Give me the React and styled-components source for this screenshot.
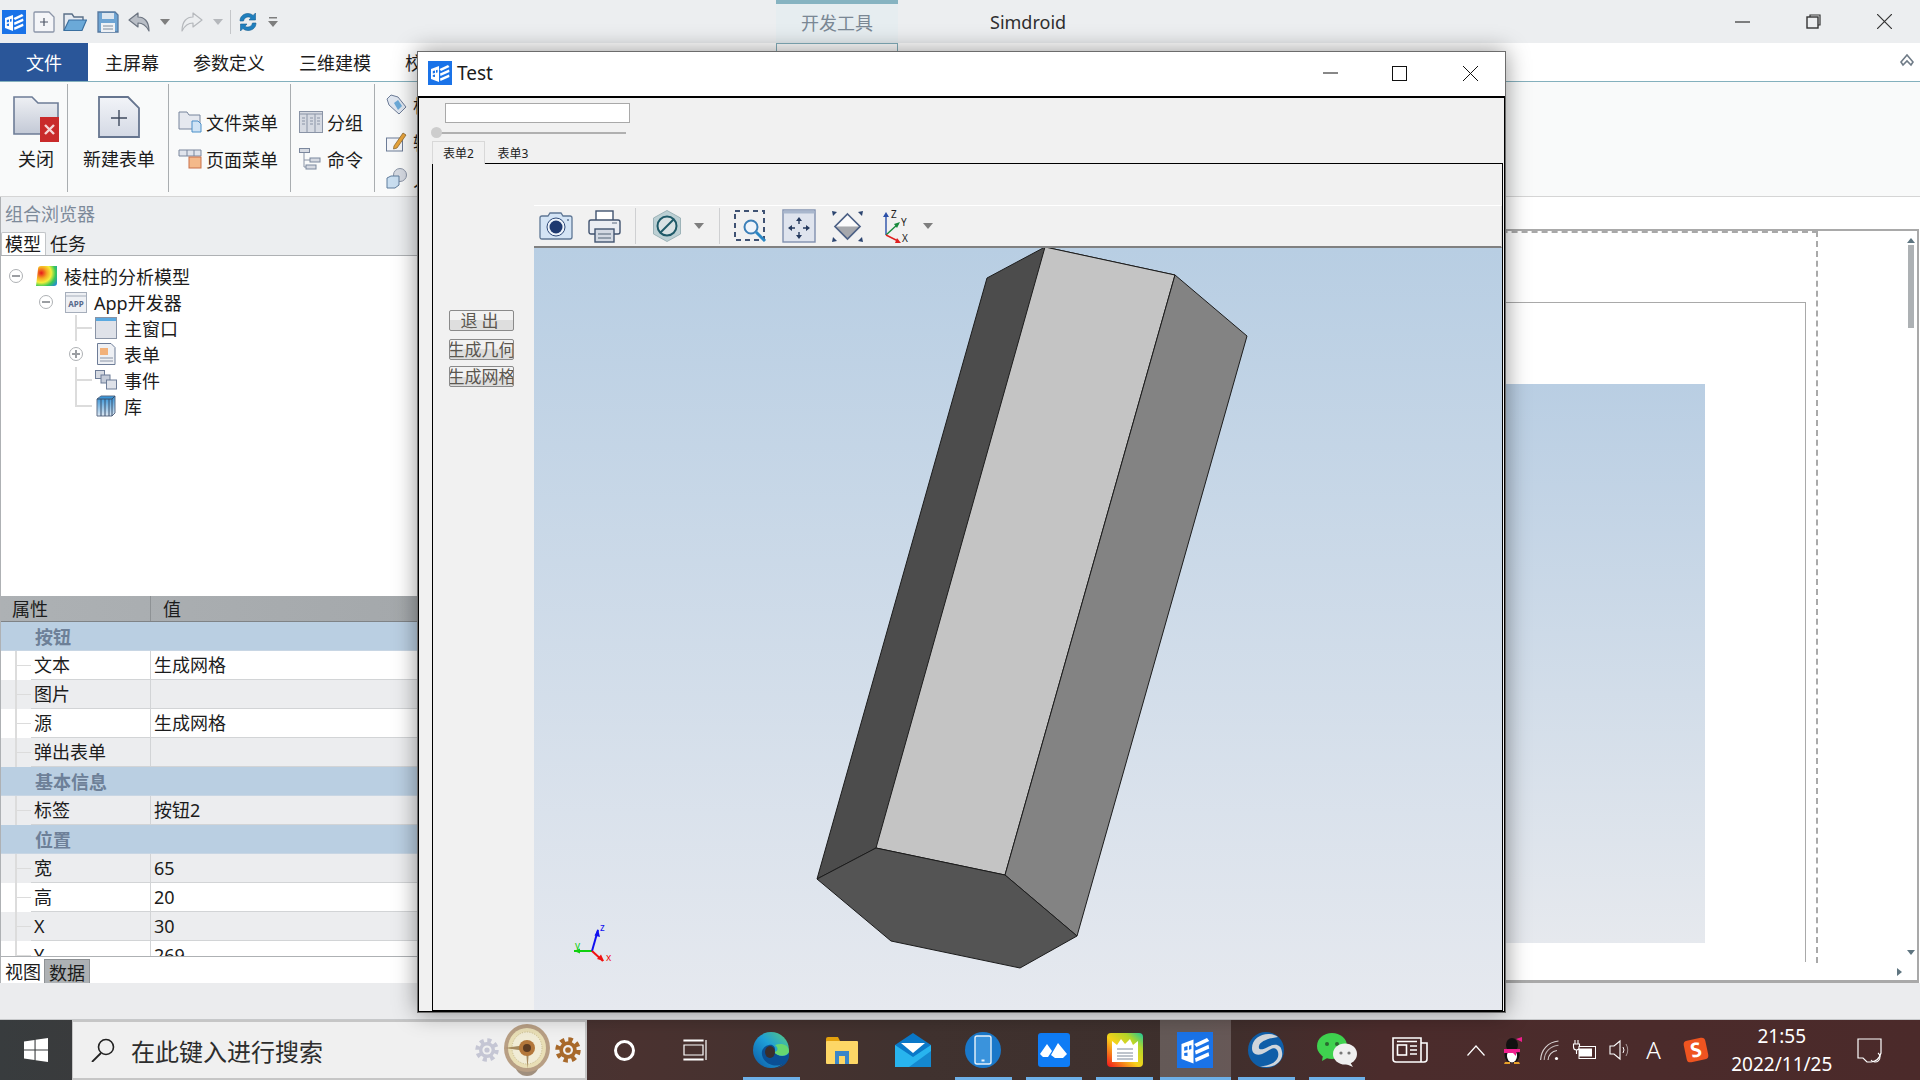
import React from 'react';
import styled, { createGlobalStyle } from 'styled-components';

const SANS = `"Noto Sans", "Noto Sans CJK SC", sans-serif`;

const GlobalStyle = createGlobalStyle`
    html, body { margin: 0; padding: 0; background: #fff; }
    body { font-family: ${SANS}; color: #1c1c1c; }
    * { box-sizing: border-box; }
`;

const Screen = styled.div`
    position: relative;
    display: flex;
    flex-direction: column;
    width: 1920px;
    height: 1080px;
    overflow: hidden;
`;

const Glyph = styled.svg`
    display: block;
    flex: none;
    margin-left: ${(p) => p.$ml || 0}px;
`;

/* ---------- icons ---------- */

const AppLogo = ({ s = 24, ml }) => (
    <Glyph $ml={ml} width={s} height={s} viewBox="0 0 24 24">
        <rect width="24" height="24" fill="#1a73e8" />
        <path d="M3 8 L11 5 V21 L3 18 Z" fill="#fff" />
        <path d="M4.8 10 L7 9.4 V12 L4.8 12.5 Z M8 9.2 L9.6 8.7 V11.4 L8 11.8 Z M4.8 14 L7 13.6 V16 L4.8 15.8 Z" fill="#1a73e8" />
        <path d="M11.5 8 L20 4 L21.5 6 L13 10 Z M12 12.5 L21 8.5 L21.5 11 L12.5 15 Z M12 17.5 L21 13.5 L21.5 16 L12.5 20 Z" fill="#fff" />
    </Glyph>
);

const QuickNew = ({ ml }) => (
    <Glyph $ml={ml} width="22" height="22" viewBox="0 0 22 22">
        <path d="M1 2 Q1 1 2 1 H16 L21 6 V20 Q21 21 20 21 H2 Q1 21 1 20 Z" fill="#f4f5f8" stroke="#8b95a8" strokeWidth="1.3" />
        <path d="M11 7 V15 M7 11 H15" stroke="#4c5566" strokeWidth="1.2" />
    </Glyph>
);

const QuickOpen = ({ ml }) => (
    <Glyph $ml={ml} width="24" height="20" viewBox="0 0 24 20">
        <path d="M1 18 V2 H9 L11 5 H20 V8" fill="#e6ebf2" stroke="#5b7088" strokeWidth="1.4" />
        <path d="M1 18.5 L6 8 H23.5 L19 18.5 Z" fill="#6ba9d8" stroke="#3a6f9f" strokeWidth="1.2" />
    </Glyph>
);

const QuickSave = ({ ml }) => (
    <Glyph $ml={ml} width="22" height="22" viewBox="0 0 22 22">
        <path d="M1 1 H18 L21 4 V21 H1 Z" fill="#6ea4d3" stroke="#56789e" strokeWidth="1.3" />
        <rect x="5" y="2" width="12" height="6" fill="#dce6f0" />
        <rect x="4" y="12" width="14" height="9" fill="#eef1f5" />
        <path d="M6 15 H16 M6 18 H16" stroke="#7d8a9a" />
    </Glyph>
);

const ArrowBack = ({ ml, flip, fill, stroke }) => (
    <Glyph $ml={ml} width="22" height="20" viewBox="0 0 22 20" style={flip ? { transform: 'scaleX(-1)' } : undefined}>
        <path d="M1 8 L10 1 V5 C16 5 21 9 21 19 C18 13 15 11 10 11 V15 Z" fill={fill} stroke={stroke} strokeWidth="1.2" strokeLinejoin="round" />
    </Glyph>
);

const Caret = ({ ml, w = 10, color = '#7e7e7e' }) => (
    <Glyph $ml={ml} width={w} height="6" viewBox="0 0 10 6">
        <path d="M0 0 H10 L5 6 Z" fill={color} />
    </Glyph>
);

const QuickMore = ({ ml }) => (
    <Glyph $ml={ml} width="10" height="10" viewBox="0 0 10 10">
        <path d="M1 0 H9 V1.5 H1 Z M0 4 H10 L5 10 Z" fill="#7e7e7e" />
    </Glyph>
);

const Refresh = ({ ml }) => (
    <Glyph $ml={ml} width="20" height="22" viewBox="0 0 20 22">
        <path d="M2 10 C2 5 6 2.5 10 2.5 C12.5 2.5 14 3.5 15 4.5 L17.5 2 V9 H11 L13 6.8 C11 5.2 6.5 5.5 5.5 10 Z" fill="#1f7fbe" stroke="#175f92" strokeWidth=".6" />
        <path d="M18 12 C18 17 14 19.5 10 19.5 C7.5 19.5 6 18.5 5 17.5 L2.5 20 V13 H9 L7 15.2 C9 16.8 13.5 16.5 14.5 12 Z" fill="#1f7fbe" stroke="#175f92" strokeWidth=".6" />
    </Glyph>
);

const CloseFolder = () => (
    <Glyph width="46" height="46" viewBox="0 0 46 46">
        <defs>
            <linearGradient id="folderFill" x1="0" y1="0" x2="0" y2="1">
                <stop offset="0" stopColor="#eef0f4" />
                <stop offset="1" stopColor="#c3c9d6" />
            </linearGradient>
        </defs>
        <path d="M1 1 H19 L25 7 H45 V38 H1 Z" fill="url(#folderFill)" stroke="#6d7c97" strokeWidth="1.6" />
        <rect x="27" y="21" width="19" height="25" fill="#c92a2a" />
        <path d="M32 29 L41 38 M41 29 L32 38" stroke="#f6d5d5" strokeWidth="2.4" />
    </Glyph>
);

const NewForm = () => (
    <Glyph width="42" height="42" viewBox="0 0 42 42">
        <defs>
            <linearGradient id="formFill" x1="0" y1="0" x2="0" y2="1">
                <stop offset="0" stopColor="#f2f4f8" />
                <stop offset="1" stopColor="#d4d9e4" />
            </linearGradient>
        </defs>
        <path d="M1 1 H30 L41 12 V41 H1 Z" fill="url(#formFill)" stroke="#66758f" strokeWidth="1.8" />
        <path d="M21 14 V30 M13 22 H29" stroke="#3f4a5e" strokeWidth="1.4" />
    </Glyph>
);

const FileMenuIcon = () => (
    <Glyph width="24" height="22" viewBox="0 0 24 22">
        <path d="M1 1 H9 L11 4 H22 V18 H1 Z" fill="#e5e8ef" stroke="#76849c" />
        <path d="M14 10 H20 L23 13 V21 H14 Z" fill="#cfe3f5" stroke="#4b8fc8" />
    </Glyph>
);

const PageMenuIcon = () => (
    <Glyph width="24" height="20" viewBox="0 0 24 20">
        <path d="M1 1 H23 V7 H1 Z M9 1 V7 M16 1 V7" fill="#e0e4ec" stroke="#7b879d" />
        <rect x="11" y="8" width="12" height="11" fill="#f4b98a" stroke="#c9714a" />
    </Glyph>
);

const GroupIcon = () => (
    <Glyph width="24" height="22" viewBox="0 0 24 22">
        <rect x=".5" y=".5" width="23" height="21" fill="#d6dae2" stroke="#8a94a6" />
        <path d="M1 3 H23 M8 3 V22 M16 3 V22 M3 7 H6 M3 10 H6 M3 13 H6 M11 7 H14 M11 10 H14 M11 13 H14 M18 7 H21 M18 10 H21 M18 13 H21" stroke="#8a94a6" />
    </Glyph>
);

const CommandIcon = () => (
    <Glyph width="22" height="22" viewBox="0 0 22 22">
        <path d="M5 5 V19 H8 M5 12 H12" fill="none" stroke="#8a94a6" />
        <rect x=".5" y=".5" width="10" height="4" fill="#d6dae2" stroke="#7b879d" />
        <rect x="11" y="10" width="10" height="4" fill="#d6dae2" stroke="#7b879d" />
        <rect x="7" y="17" width="10" height="4" fill="#d6dae2" stroke="#7b879d" />
    </Glyph>
);

const TagIcon = () => (
    <Glyph width="21" height="21" viewBox="0 0 21 21">
        <path d="M1 5 L5 1 L12 3 L20 13 L13 20 L3 11 Z" fill="#dfe6f0" stroke="#6d7c97" />
        <path d="M8 9 L12 6 L16 12 L12 16 Z" fill="#6ba9d8" />
    </Glyph>
);

const EditIcon = () => (
    <Glyph width="21" height="20" viewBox="0 0 21 20">
        <rect x=".5" y="6" width="16" height="13" fill="#f4f5f8" stroke="#6d7c97" />
        <path d="M8 14 L17 1 L20 3 L11 16 L7.5 17 Z" fill="#e8a33a" stroke="#8d6a30" strokeWidth=".8" />
    </Glyph>
);

const ShapeIcon = () => (
    <Glyph width="21" height="21" viewBox="0 0 21 21">
        <circle cx="14" cy="7" r="6.5" fill="#d6dae2" stroke="#8a94a6" />
        <path d="M1 10 L5 8 H13 V17 L9 20 H1 Z" fill="#c9def0" stroke="#5f7c9c" />
    </Glyph>
);

const ModelIcon = () => (
    <Glyph width="22" height="22" viewBox="0 0 22 22">
        <defs>
            <radialGradient id="heatFill" cx=".25" cy=".35" r=".95">
                <stop offset="0" stopColor="#e8171c" />
                <stop offset=".28" stopColor="#f5a623" />
                <stop offset=".5" stopColor="#f4ee3a" />
                <stop offset=".72" stopColor="#39c957" />
                <stop offset="1" stopColor="#1f7fe8" />
            </radialGradient>
        </defs>
        <path d="M3 4 Q3 1 6 1 H22 V18 Q22 21 19 21 H1 Z" fill="url(#heatFill)" />
    </Glyph>
);

const AppNodeIcon = () => (
    <Glyph width="22" height="21" viewBox="0 0 22 21">
        <rect x=".5" y=".5" width="21" height="20" fill="#eef0f4" stroke="#a6aebb" />
        <path d="M1 4 H21" stroke="#a6aebb" />
        <text x="11" y="15" fontSize="8" fontWeight="700" textAnchor="middle" fill="#56688a" fontFamily={SANS}>APP</text>
    </Glyph>
);

const WindowNodeIcon = () => (
    <Glyph width="22" height="22" viewBox="0 0 22 22">
        <rect x=".5" y=".5" width="21" height="21" fill="#dfe2e9" stroke="#8a94a6" />
        <rect x="1" y="1" width="20" height="3" fill="#5aa9e0" />
    </Glyph>
);

const FormNodeIcon = () => (
    <Glyph width="22" height="22" viewBox="0 0 22 22">
        <path d="M2.5 .5 H16 L20 4.5 V21.5 H2.5 Z" fill="#eef0f4" stroke="#6d7c97" />
        <rect x="5" y="5" width="8" height="7" fill="#f2b179" />
        <path d="M5 15 H18 M5 18 H18" stroke="#8a94a6" />
    </Glyph>
);

const EventNodeIcon = () => (
    <Glyph width="22" height="20" viewBox="0 0 22 20">
        <rect x=".5" y=".5" width="9" height="8" fill="#d6dae2" stroke="#6d7c97" />
        <rect x="6" y="5" width="9" height="8" fill="#c4cbd8" stroke="#6d7c97" />
        <rect x="11.5" y="10" width="10" height="9" fill="#dfe2e9" stroke="#6d7c97" />
    </Glyph>
);

const LibraryNodeIcon = () => (
    <Glyph width="22" height="22" viewBox="0 0 22 22">
        <defs>
            <linearGradient id="bookFill" x1="0" y1="0" x2="0" y2="1">
                <stop offset="0" stopColor="#2b8ed6" />
                <stop offset="1" stopColor="#dfe8f2" />
            </linearGradient>
        </defs>
        <path d="M2 4 L6 1 H20 V18 L17 21 H2 Z" fill="url(#bookFill)" stroke="#5f6f88" />
        <path d="M6 4 V21 M10 4 V21 M14 4 V21 M2 4 H17 V21 M17 4 L20 1" fill="none" stroke="#39506e" />
    </Glyph>
);

const Camera = ({ ml }) => (
    <Glyph $ml={ml} width="34" height="28" viewBox="0 0 34 28">
        <path d="M1 6 Q1 4 3 4 H9 L11 1 H22 L24 4 H31 Q33 4 33 6 V25 Q33 27 31 27 H3 Q1 27 1 25 Z" fill="#d4e4f5" stroke="#5f7795" strokeWidth="1.3" />
        <circle cx="17" cy="15" r="9" fill="#eef4fb" stroke="#2f4a78" />
        <circle cx="17" cy="15" r="6.5" fill="#1f3a70" />
        <circle cx="29" cy="8" r="1" fill="#5f7795" />
    </Glyph>
);

const Printer = ({ ml }) => (
    <Glyph $ml={ml} width="33" height="33" viewBox="0 0 33 33">
        <rect x="8" y="1" width="17" height="10" fill="#fff" stroke="#41536f" strokeWidth="1.4" />
        <rect x="1" y="10" width="31" height="14" rx="2" fill="#eaedf3" stroke="#41536f" strokeWidth="1.4" />
        <path d="M24 13 H29" stroke="#8a94a6" strokeWidth="1.5" />
        <rect x="7" y="19" width="19" height="13" fill="#d3d9e3" stroke="#41536f" strokeWidth="1.4" />
        <path d="M10 24 H23 M10 28 H23" stroke="#7d8a9a" strokeWidth="1.3" />
    </Glyph>
);

const HexNone = ({ ml }) => (
    <Glyph $ml={ml} width="28" height="32" viewBox="0 0 28 32">
        <path d="M14 .5 L27.5 8 V24 L14 31.5 L.5 24 V8 Z" fill="#bcd0d4" stroke="#9db3b8" />
        <circle cx="14" cy="16" r="9.5" fill="#d9e2e4" stroke="#1f5a68" strokeWidth="2" />
        <path d="M7.5 22.5 L20.5 9.5" stroke="#1f5a68" strokeWidth="2" />
    </Glyph>
);

const ZoomBox = ({ ml }) => (
    <Glyph $ml={ml} width="33" height="32" viewBox="0 0 33 32">
        <rect x="1" y="1" width="29" height="29" fill="none" stroke="#3f5273" strokeWidth="2" strokeDasharray="5 4" />
        <circle cx="17" cy="17" r="6.5" fill="#eef4fb" stroke="#3b7fb8" strokeWidth="2" />
        <path d="M22 22 L31 31" stroke="#2a87c4" strokeWidth="3" />
    </Glyph>
);

const MoveView = ({ ml }) => (
    <Glyph $ml={ml} width="34" height="34" viewBox="0 0 34 34">
        <rect x="1" y="1" width="32" height="32" fill="#dfe4ee" stroke="#7f8fae" strokeWidth="1.4" />
        <rect x="1.5" y="1.5" width="31" height="3" fill="#a9b7cd" />
        <path d="M17 11 V15 M17 23 V27 M9 19 H13 M21 19 H25" stroke="#24395e" strokeWidth="1.4" />
        <path d="M17 8 L20 12 H14 Z M17 30 L14 26 H20 Z M6 19 L10 16 V22 Z M28 19 L24 22 V16 Z" fill="#24395e" />
    </Glyph>
);

const FitDiamond = ({ ml }) => (
    <Glyph $ml={ml} width="33" height="33" viewBox="0 0 33 33">
        <path d="M16.5 4 L29 16.5 H4 Z" fill="#fbfbfc" />
        <path d="M4 16.5 H29 L16.5 29 Z" fill="#a6a8ad" />
        <path d="M16.5 4 L29 16.5 L16.5 29 L4 16.5 Z" fill="none" stroke="#4c6085" strokeWidth="1.7" />
        <path d="M1 1 L6 2 L2 6 Z M32 1 L31 6 L27 2 Z M1 32 L2 27 L6 31 Z M32 32 L27 31 L31 27 Z" fill="#2c4570" />
    </Glyph>
);

const AxisView = ({ ml }) => (
    <Glyph $ml={ml} width="28" height="34" viewBox="0 0 28 34">
        <path d="M3 26 V6" stroke="#2a4fa8" strokeWidth="1.4" />
        <path d="M3 3 L6 8 H0 Z" fill="#2a4fa8" />
        <path d="M3 26 L15 15" stroke="#178a3c" strokeWidth="1.4" />
        <path d="M17 13 L14 19 L11 15 Z" fill="#178a3c" />
        <path d="M3 26 L15 32" stroke="#e02020" strokeWidth="1.4" />
        <path d="M18 34 L12 34 L14 29 Z" fill="#e02020" />
        <text x="8" y="9" fontSize="10" fill="#222" fontFamily={SANS}>Z</text>
        <text x="18" y="17" fontSize="10" fill="#222" fontFamily={SANS}>Y</text>
        <text x="19" y="33" fontSize="10" fill="#222" fontFamily={SANS}>X</text>
    </Glyph>
);

const WinLogo = () => (
    <Glyph width="24" height="24" viewBox="0 0 24 24">
        <path d="M0 3.5 L10.5 2 V11.4 H0 Z M11.6 1.8 L24 0 V11.4 H11.6 Z M0 12.6 H10.5 V22 L0 20.5 Z M11.6 12.6 H24 V24 L11.6 22.2 Z" fill="#fff" />
    </Glyph>
);

const SearchGlass = () => (
    <Glyph width="24" height="24" viewBox="0 0 24 24">
        <circle cx="15" cy="9" r="7.5" fill="none" stroke="#222" strokeWidth="1.6" />
        <path d="M10 15 L1 24" stroke="#222" strokeWidth="1.8" />
    </Glyph>
);

const Gear = ({ size, ml, color, hub, inner }) => (
    <Glyph $ml={ml} width={size} height={size} viewBox="0 0 24 24">
        <circle cx="12" cy="12" r="9.5" fill="none" stroke={color} strokeWidth="4.5" strokeDasharray="4 3.46" />
        <circle cx="12" cy="12" r="8" fill={color} />
        <circle cx="12" cy="12" r="4.6" fill={hub} />
        <circle cx="12" cy="12" r="2.6" fill={inner} />
    </Glyph>
);

const Dial = ({ ml }) => (
    <Glyph $ml={ml} width="50" height="52" viewBox="0 0 50 52">
        <circle cx="25" cy="40" r="12" fill="#a08f7d" />
        <ellipse cx="25" cy="24" rx="23" ry="24" fill="#b89f84" />
        <ellipse cx="25" cy="24" rx="19" ry="20" fill="#e9dfb6" />
        <ellipse cx="25" cy="24" rx="15" ry="16" fill="#f1ecd6" stroke="#c5b98c" strokeDasharray="1 1.5" />
        <path d="M3 24 L24 21 V27 Z M24 26 H27 L25.5 45 Z" fill="#a58a5f" />
        <circle cx="25" cy="24" r="8" fill="#b3773a" />
        <circle cx="25" cy="24" r="4" fill="#5c3c22" />
    </Glyph>
);

const EdgeIcon = () => (
    <Glyph width="36" height="36" viewBox="0 0 36 36">
        <defs>
            <linearGradient id="edgeFill" x1="0" y1="1" x2="1" y2="0">
                <stop offset="0" stopColor="#0c59a4" />
                <stop offset=".55" stopColor="#1e9fd8" />
                <stop offset="1" stopColor="#5ed07a" />
            </linearGradient>
        </defs>
        <circle cx="18" cy="18" r="18" fill="url(#edgeFill)" />
        <path d="M36 21 C32 26 24 24 21 20 C24 16 20 12 16 13 C10 14 7 20 10 26 C13 32 22 36 30 32 C26 36 20 37 16 36 C32 38 37 28 36 21 Z" fill="#0a4f94" />
        <path d="M36 20 C36 12 28 11 22 13 C26 16 25 20 21 20 C24 24 32 26 36 20 Z" fill="#67d66f" />
        <ellipse cx="17" cy="20" rx="5" ry="6" fill="#3a2e2c" />
    </Glyph>
);

const ExplorerIcon = () => (
    <Glyph width="32" height="27" viewBox="0 0 32 27">
        <path d="M0 2 Q0 0 2 0 H12 L14 4 V10 H0 Z" fill="#e3a10e" />
        <rect x="0" y="4" width="32" height="23" rx="1" fill="#fdd766" />
        <path d="M9 27 V14 H23 V27 H19 V19 H13 V27 Z" fill="#3a86c8" />
    </Glyph>
);

const MailIcon = () => (
    <Glyph width="36" height="34" viewBox="0 0 36 34">
        <path d="M0 12 L18 0 L36 12 V34 H0 Z" fill="#0a78c8" />
        <path d="M6 10 H30 L18 20 Z" fill="#fff" />
        <path d="M0 12 L18 24 L36 12 V34 H0 Z" fill="#28b4ee" />
        <path d="M36 34 H14 L36 18 Z" fill="#1488cf" />
    </Glyph>
);

const PhoneIcon = () => (
    <Glyph width="36" height="36" viewBox="0 0 36 36">
        <circle cx="18" cy="18" r="18" fill="#1a78c9" />
        <rect x="10" y="4" width="16" height="28" rx="2" fill="#3a93dc" stroke="#e8f2fa" strokeWidth="1.4" />
        <rect x="16.5" y="27.5" width="3" height="2" fill="#e8f2fa" />
    </Glyph>
);

const FeishuIcon = () => (
    <Glyph width="32" height="34" viewBox="0 0 32 34">
        <rect width="32" height="34" rx="3" fill="#0f7cf5" />
        <path d="M2 21 L9 11 L14 18 L10 24 H5 Z M13 22 L20 10 L29 21 L25 25 H17 Z" fill="#fff" />
    </Glyph>
);

const NotesIcon = () => (
    <Glyph width="36" height="34" viewBox="0 0 36 34">
        <defs>
            <linearGradient id="rainbowFill" x1="0" y1="1" x2="1" y2="0">
                <stop offset="0" stopColor="#f2101c" />
                <stop offset=".45" stopColor="#f8d21a" />
                <stop offset=".75" stopColor="#b5d62a" />
                <stop offset="1" stopColor="#17c9a0" />
            </linearGradient>
        </defs>
        <rect width="36" height="34" rx="4" fill="url(#rainbowFill)" />
        <path d="M5 8 L10 12 L14 6 L18 11 L23 6 L26 12 L31 8 V29 H5 Z" fill="#fff" />
        <path d="M10 16 H26 M10 20 H26 M10 23 H26 M10 26 H26" stroke="#7e8a9a" strokeWidth="1.2" />
    </Glyph>
);

const SwirlIcon = () => (
    <Glyph width="36" height="36" viewBox="0 0 36 36">
        <circle cx="18" cy="18" r="18" fill="#0f5ea8" />
        <path d="M30 5 C20 -2 4 4 4 16 C4 24 12 24 18 20 C24 16 28 14 30 20 C32 28 24 34 12 34 C24 38 36 30 34 20 C33 10 24 12 18 16 C14 18 10 18 11 14 C12 9 22 6 30 5 Z" fill="#cfd5db" />
    </Glyph>
);

const WeChatIcon = () => (
    <Glyph width="40" height="34" viewBox="0 0 40 34">
        <ellipse cx="15" cy="13" rx="15" ry="13" fill="#3fd24f" />
        <path d="M6 22 L5 28 L12 24 Z" fill="#3fd24f" />
        <circle cx="10" cy="11" r="2" fill="#2a6a30" />
        <circle cx="20" cy="11" r="2" fill="#2a6a30" />
        <ellipse cx="28" cy="21" rx="12" ry="10.5" fill="#efefef" />
        <path d="M33 29 L36 34 L29 31 Z" fill="#efefef" />
        <circle cx="24" cy="20" r="1.6" fill="#777" />
        <circle cx="32" cy="20" r="1.6" fill="#777" />
    </Glyph>
);

const NewsIcon = ({ ml }) => (
    <Glyph $ml={ml} width="36" height="26" viewBox="0 0 36 26">
        <path d="M1 1 H29 V25 H4 Q1 25 1 22 Z M29 6 H35 V22 Q35 25 32 25 H29" fill="none" stroke="#fff" strokeWidth="1.6" />
        <rect x="5.5" y="8" width="9" height="10" fill="none" stroke="#fff" strokeWidth="1.6" />
        <path d="M5 4.5 H25 M18 9 H25 M18 13 H25 M18 17 H25" stroke="#fff" strokeWidth="1.6" />
    </Glyph>
);

const Chevron = ({ ml }) => (
    <Glyph $ml={ml} width="18" height="11" viewBox="0 0 18 11">
        <path d="M.5 10.5 L9 1 L17.5 10.5" fill="none" stroke="#fff" strokeWidth="1.2" />
    </Glyph>
);

const Penguin = ({ ml }) => (
    <Glyph $ml={ml} width="21" height="27" viewBox="0 0 21 27">
        <ellipse cx="10" cy="8" rx="6" ry="7" fill="#111" />
        <ellipse cx="10" cy="18" rx="7.5" ry="8" fill="#111" />
        <ellipse cx="10" cy="19" rx="5" ry="6.5" fill="#fff" />
        <path d="M2 12 H18 V15 L14 15.5 V19 L11 16 H2 Z" fill="#ef1f8e" />
        <path d="M14 2 L20 0 V5 Z" fill="#ef1f8e" />
        <path d="M3 25 H8 V27 H2 Z M12 25 H17 L18 27 H12 Z" fill="#e8a02a" />
    </Glyph>
);

const WifiIcon = ({ ml }) => (
    <Glyph $ml={ml} width="19" height="21" viewBox="0 0 19 21">
        <g fill="none" stroke="#d9d3d3" strokeWidth="1.1">
            <path d="M.6 20 C1 10 8 2 18.5 1" />
            <path d="M4.2 20 C4.5 12 10 6 18.5 5.2" opacity=".8" />
            <path d="M8 20 C8.2 15 12 11 17 10.5" />
        </g>
        <circle cx="16.5" cy="18.5" r="1.6" fill="#fff" />
    </Glyph>
);

const BatteryIcon = ({ ml }) => (
    <Glyph $ml={ml} width="24" height="20" viewBox="0 0 24 20">
        <path d="M3 0 V4 M6 0 V4 M1.5 4 H7.5 V7 Q7.5 10 4.5 10 Q1.5 10 1.5 7 Z M4.5 10 V14" fill="none" stroke="#fff" strokeWidth="1.1" />
        <rect x="7" y="6.5" width="16.5" height="12" fill="#4a2a2a" stroke="#fff" />
        <rect x="7" y="8.5" width="13" height="8" fill="#fff" />
    </Glyph>
);

const VolumeIcon = ({ ml }) => (
    <Glyph $ml={ml} width="22" height="22" viewBox="0 0 22 22">
        <path d="M1 7 H5 L11 2 V20 L5 15 H1 Z" fill="none" stroke="#fff" strokeWidth="1.1" />
        <path d="M14 8 Q16 11 14 14" fill="none" stroke="#fff" />
        <path d="M17 5 Q20.5 11 17 17" fill="none" stroke="#a99a9a" />
    </Glyph>
);

const NoticeIcon = ({ ml }) => (
    <Glyph $ml={ml} width="25" height="25" viewBox="0 0 25 25">
        <path d="M1 1 H24 V15 Q22 23 14 24 H10 L6 20 H1 Z" fill="none" stroke="#fff" strokeWidth="1.2" />
        <path d="M21 15 A5 5 0 1 1 14 22" fill="none" stroke="#fff" strokeWidth="1.1" />
    </Glyph>
);

/* ---------- main window chrome ---------- */

const TitleBar = styled.div`
    display: flex;
    align-items: center;
    flex: none;
    height: 43px;
    padding-left: 2px;
    background: #eceef0;
`;

const QuickTools = styled.div`
    display: flex;
    align-items: center;
    width: 774px;
`;

const QuickSep = styled.div`
    flex: none;
    width: 1px;
    height: 24px;
    margin-left: 7px;
    background: #c4c6c9;
`;

const ContextTab = styled.div`
    display: flex;
    align-items: center;
    justify-content: center;
    width: 122px;
    height: 43px;
    padding-bottom: 4px;
    border-top: 4px solid #86b3c1;
    background: #e6edf0;
    color: #7a8794;
    font-size: 18px;
`;

const AppTitle = styled.div`
    margin-left: 92px;
    color: #2f2f2f;
    font-size: 18px;
`;

const WindowControls = styled.div`
    display: flex;
    align-items: center;
    margin-left: auto;
`;

const ControlSlot = styled.div`
    display: flex;
    align-items: center;
    justify-content: center;
    width: ${(p) => p.$w}px;
`;

const MenuBar = styled.div`
    position: relative;
    display: flex;
    align-items: stretch;
    flex: none;
    height: 39px;
    background: #fff;
    border-bottom: 1px solid #84b0bd;
`;

const FileTab = styled.div`
    display: flex;
    align-items: center;
    justify-content: center;
    width: 88px;
    background: #2a5699;
    color: #fff;
    font-size: 18px;
`;

const MenuItems = styled.div`
    display: flex;
    align-items: center;
    gap: 34px;
    padding-left: 17px;
    font-size: 18px;
`;

const ContextOutline = styled.div`
    position: absolute;
    left: 776px;
    top: 0;
    width: 122px;
    height: 12px;
    border: 1px solid #84b0bd;
    background: #fff;
`;

const CollapseMark = styled.svg`
    position: absolute;
    right: 6px;
    top: 11px;
`;

const Ribbon = styled.div`
    display: flex;
    flex: none;
    height: 115px;
    padding: 2px 0 4px 1px;
    background: #f9fafa;
    border-bottom: 1px solid #d5d5d5;
`;

const RibbonGroup = styled.div`
    flex: none;
    width: ${(p) => p.$w}px;
    border-right: 1px solid #a9adb0;
`;

const LargeTool = styled.div`
    display: flex;
    flex-direction: column;
    align-items: center;
    padding: 12px 0 0 ${(p) => p.$shift}px;
    font-size: 18px;
`;

const LargeIcon = styled.div`
    display: flex;
    justify-content: center;
    height: 49px;
`;

const ToolRows = styled.div`
    padding: ${(p) => p.$top}px 0 0 ${(p) => p.$left}px;
    font-size: 18px;
`;

const ToolRow = styled.div`
    display: flex;
    align-items: center;
    gap: ${(p) => p.$gap || 4}px;
    height: 37px;
    white-space: nowrap;
`;

/* ---------- left panel ---------- */

const Body = styled.div`
    display: flex;
    flex: 1;
    min-height: 0;
    background: #fff;
`;

const LeftPanel = styled.div`
    display: flex;
    flex-direction: column;
    flex: none;
    width: 420px;
    border-left: 1px solid #aeb1b4;
`;

const PanelCaption = styled.div`
    flex: none;
    height: 35px;
    padding: 2px 0 0 4px;
    background: #eceef0;
    color: #7d8a9a;
    font-size: 18px;
    line-height: 30px;
`;

const ModelTabs = styled.div`
    display: flex;
    flex: none;
    height: 24px;
    background: #eceef0;
    border-bottom: 1px solid #aeb1b4;
    font-size: 18px;
    line-height: 24px;
`;

const ModelTab = styled.div`
    padding: 0 4px 0 3px;
    background: ${(p) => (p.$active ? '#fff' : 'transparent')};
    border: ${(p) => (p.$active ? '1px solid #c2c5c8' : '1px solid transparent')};
    border-bottom: 0;
    border-radius: 2px 2px 0 0;
    line-height: 22px;
`;

const Tree = styled.div`
    flex: none;
    height: 340px;
    padding-top: 7px;
    background: #fff;
`;

const TreeRow = styled.div`
    position: relative;
    display: flex;
    align-items: center;
    height: 26px;
    padding-left: ${(p) => p.$pad}px;
    font-size: 18px;
    white-space: nowrap;

    ${(p) => p.$branch && `
        &::before {
            content: '';
            position: absolute;
            left: 74px;
            top: 0;
            width: 17px;
            height: ${p.$branch === 'last' ? '13px' : '26px'};
            border-left: 2px solid #dcdcdc;
        }
        &::after {
            content: '';
            position: absolute;
            left: 74px;
            top: 12px;
            width: 17px;
            height: 2px;
            background: #dcdcdc;
        }
    `}
`;

const Toggle = styled.div`
    position: relative;
    flex: none;
    width: 14px;
    height: 14px;
    margin-right: 12px;
    border: 1px solid #aeb1b4;
    border-radius: 50%;
    background: #fff;

    &::before {
        content: '';
        position: absolute;
        left: 2px;
        right: 2px;
        top: 5px;
        height: 2px;
        background: #9b9ea2;
    }

    ${(p) => p.$closed && `
        &::after {
            content: '';
            position: absolute;
            top: 2px;
            bottom: 2px;
            left: 5px;
            width: 2px;
            background: #9b9ea2;
        }
    `}
`;

const TreeSpacer = styled.div`
    flex: none;
    width: 26px;
`;

const TreeLabel = styled.span`
    margin-left: 7px;
`;

const PropHeader = styled.div`
    display: flex;
    flex: none;
    height: 26px;
    background: linear-gradient(90deg, #adb1b4, #a4a8ab);
    border-bottom: 1px solid #7f8386;
    font-size: 18px;
    line-height: 27px;
`;

const PropHeadCell = styled.div`
    width: ${(p) => p.$w || 150}px;
    padding-left: ${(p) => p.$pad}px;
    border-right: ${(p) => (p.$last ? 0 : '1px solid #8e9295')};
`;

const PropList = styled.div`
    flex: none;
    height: 334px;
    overflow: hidden;
    font-size: 18px;
`;

const PropGroup = styled.div`
    height: 29px;
    padding-left: 34px;
    background: #bacfe2;
    border-bottom: 1px solid #c8d6e4;
    color: #6d8098;
    font-weight: 700;
    line-height: 30px;
`;

const PropRow = styled.div`
    display: flex;
    height: 29px;
    background: ${(p) => (p.$shade ? '#ecedef' : '#fff')};
    line-height: 29px;
`;

const PropGuide = styled.div`
    position: relative;
    flex: none;
    width: 30px;

    &::before {
        content: '';
        position: absolute;
        left: 14px;
        top: 0;
        bottom: 0;
        width: 2px;
        background: #dcdcdc;
    }

    &::after {
        content: '';
        position: absolute;
        left: 16px;
        right: 0;
        top: 14px;
        height: 1px;
        background: #dcdcdc;
    }
`;

const PropName = styled.div`
    flex: none;
    width: 120px;
    padding-left: 3px;
    border-bottom: 1px solid #d2d4d6;
    border-right: 1px solid #d2d4d6;
`;

const PropValue = styled.div`
    flex: 1;
    padding-left: 3px;
    border-bottom: 1px solid #d2d4d6;
`;

const BottomTabs = styled.div`
    display: flex;
    align-items: flex-end;
    flex: none;
    height: 27px;
    padding-left: 2px;
    gap: 1px;
    border-top: 1px solid #aeb1b4;
    font-size: 18px;
`;

const BottomTab = styled.div`
    height: 24px;
    padding: 0 ${(p) => (p.$active ? 2 : 4)}px;
    background: ${(p) => (p.$active ? 'transparent' : '#adb1b4')};
    border: ${(p) => (p.$active ? 0 : '1px solid #8e9295')};
    border-bottom: 0;
    line-height: 26px;
`;

/* ---------- designer canvas, mostly hidden by the dialog ---------- */

const Workspace = styled.div`
    display: flex;
    flex: 1;
    flex-direction: column;
    padding-top: 32px;
    padding-right: 1px;
`;

const DesignFrame = styled.div`
    display: flex;
    flex: 1;
    flex-direction: column;
    border-top: 2px solid #a9a9a9;
    border-right: 2px solid #a9a9a9;
    border-bottom: 3px solid #a9a9a9;
`;

const DesignRow = styled.div`
    display: flex;
    height: 732px;
`;

const DashedSheet = styled.div`
    flex: none;
    width: 1398px;
    padding-top: 69px;
    padding-right: 10px;
    border-top: 2px dashed #a9a9a9;
    border-right: 2px dashed #a9a9a9;
`;

const FormOutline = styled.div`
    height: 660px;
    padding-top: 81px;
    padding-right: 100px;
    border-top: 1px solid #a9a9a9;
    border-right: 1px solid #a9a9a9;
`;

const FormFill = styled.div`
    height: 559px;
    background: linear-gradient(180deg, #b9cee3, #e6e9ee);
`;

const ScrollColumn = styled.div`
    display: flex;
    flex-direction: column;
    align-items: flex-end;
    flex: 1;
    padding: 7px 2px 0 0;
`;

const ScrollThumb = styled.div`
    width: 6px;
    height: 83px;
    margin-top: 2px;
    margin-right: 1px;
    background: #adb1b4;
`;

const ScrollArrow = styled.div`
    width: 0;
    height: 0;
    margin-top: ${(p) => p.$mt || 0}px;
    border-left: 4px solid transparent;
    border-right: 4px solid transparent;
    ${(p) => (p.$down ? 'border-top: 5px solid #5f7580;' : 'border-bottom: 5px solid #5f7580;')}
`;

const HorizontalEnd = styled.div`
    display: flex;
    justify-content: flex-end;
    padding: 5px 15px 0 0;
`;

const ScrollArrowRight = styled.div`
    width: 0;
    height: 0;
    border-top: 4px solid transparent;
    border-bottom: 4px solid transparent;
    border-left: 5px solid #5f7580;
`;

const StatusBar = styled.div`
    flex: none;
    height: 37px;
    background: #ebecee;
    border-bottom: 1px solid #c6c8ca;
`;

/* ---------- dialog ---------- */

const Dialog = styled.div`
    position: absolute;
    left: 417px;
    top: 51px;
    display: flex;
    flex-direction: column;
    width: 1089px;
    height: 962px;
    border: 1px solid #6c6c6c;
    background: #fff;
    box-shadow: 0 0 22px rgba(0, 0, 0, .42);
`;

const DialogTitle = styled.div`
    display: flex;
    align-items: center;
    flex: none;
    height: 44px;
    padding: 0 0 2px 10px;
    font-size: 19px;
    gap: 5px;
`;

const DialogControls = styled.div`
    display: flex;
    align-items: center;
    margin-left: auto;
    padding-right: 27px;
    gap: 54px;
`;

const DialogClose = styled.svg`
    margin-left: 2px;
`;

const DialogBody = styled.div`
    display: flex;
    flex: 1;
    flex-direction: column;
    min-height: 0;
    background: #f1f1f1;
    border: 1px solid #000;
    border-top-width: 2px;
`;

const NameField = styled.div`
    flex: none;
    width: 185px;
    height: 20px;
    margin: 5px 0 0 26px;
    background: #fff;
    border: 1px solid #a9a9a9;
`;

const SliderTrack = styled.div`
    position: relative;
    flex: none;
    width: 195px;
    height: 12px;
    margin: 4px 0 0 12px;

    &::before {
        content: '';
        position: absolute;
        left: 4px;
        right: 0;
        top: 5px;
        height: 2px;
        background: #b0b0b0;
    }
`;

const SliderKnob = styled.div`
    position: absolute;
    left: 0;
    top: 0;
    width: 11px;
    height: 11px;
    border-radius: 50%;
    background: #cdcdcd;
`;

const FormTabs = styled.div`
    display: flex;
    flex: none;
    height: 23px;
    margin: 2px 0 0 13px;
    font-size: 12px;
`;

const FormTab = styled.div`
    position: relative;
    z-index: 1;
    display: flex;
    align-items: center;
    justify-content: center;
    width: ${(p) => (p.$active ? 53 : 54)}px;
    margin-left: ${(p) => (p.$active ? 0 : 1)}px;
    height: 23px;
    background: ${(p) => (p.$active ? '#f1f1f1' : 'transparent')};
    border: ${(p) => (p.$active ? '1px solid #d8d8d8' : 0)};
    border-bottom: 0;
`;

const FormPanel = styled.div`
    display: flex;
    flex: 1;
    min-height: 0;
    margin: -1px 1px 0 13px;
    padding-top: 41px;
    border: 1px solid #000;
`;

const ActionColumn = styled.div`
    display: flex;
    flex-direction: column;
    flex: none;
    width: 101px;
    padding: 105px 0 0 16px;
`;

const ActionButton = styled.div`
    display: flex;
    justify-content: center;
    width: 65px;
    height: 21px;
    margin-top: ${(p) => p.$top}px;
    overflow: hidden;
    background: linear-gradient(180deg, #f2f2f2 0 50%, #dedede 50% 100%);
    border: 1px solid #8a8a8a;
    border-radius: 2px;
    color: #5b5750;
    font-size: 17px;
    line-height: 19px;
    white-space: nowrap;
    letter-spacing: ${(p) => p.$spread || 0}px;
`;

const ViewerColumn = styled.div`
    display: flex;
    flex: 1;
    flex-direction: column;
    min-width: 0;
`;

const ViewToolbar = styled.div`
    display: flex;
    align-items: center;
    flex: none;
    height: 43px;
    background: #f1f1f1;
    border-top: 1px solid #fff;
    border-right: 1px solid #dcdcdc;
    border-bottom: 2px solid #808080;
`;

const ToolSep = styled.div`
    flex: none;
    width: 1px;
    height: 36px;
    margin-left: ${(p) => p.$ml}px;
    background: #cfd0d2;
`;

const ViewCanvas = styled.svg`
    display: block;
    flex: 1;
    width: 100%;
    min-height: 0;
    background: linear-gradient(180deg, #b8cee3, #e6e9ef);
`;

/* ---------- taskbar ---------- */

const Taskbar = styled.div`
    display: flex;
    align-items: center;
    flex: none;
    height: 60px;
    background: linear-gradient(90deg, #383c3e 0, #3b3a3b 8%, #4a3230 33%, #40322f 48%, #3e302d 62%, #4b2c2c 72%, #4b2a2a 100%);
    color: #fff;
`;

const StartButton = styled.div`
    display: flex;
    align-items: center;
    justify-content: center;
    flex: none;
    width: 72px;
    height: 60px;
`;

const SearchBox = styled.div`
    display: flex;
    align-items: center;
    flex: none;
    width: 515px;
    height: 60px;
    padding-left: 18px;
    background: #f0f0f0;
    border: 2px solid #c6c6c6;
    border-left-width: 1px;
    color: #2d2d2d;
    font-size: 24px;
`;

const SearchText = styled.span`
    margin-left: 16px;
    margin-right: 152px;
    white-space: nowrap;
`;

const TaskSlot = styled.div`
    position: relative;
    display: flex;
    align-items: center;
    justify-content: center;
    flex: none;
    width: ${(p) => p.$w || 70.7}px;
    margin-left: ${(p) => p.$ml || 0}px;
    height: 60px;
    background: ${(p) => (p.$current ? 'rgba(255,255,255,.2)' : 'transparent')};

    ${(p) => p.$open && `
        &::after {
            content: '';
            position: absolute;
            left: ${p.$current ? 0 : 7}px;
            right: ${p.$current ? 0 : 7}px;
            bottom: 0;
            height: 3px;
            background: #6db0e8;
        }
    `}
`;

const CortanaRing = styled.div`
    width: 21px;
    height: 21px;
    border: 3px solid #fff;
    border-radius: 50%;
`;

const TaskView = styled.svg`
    display: block;
`;

const InputMark = styled.div`
    flex: none;
    margin-left: 15px;
    font-size: 24px;
    line-height: 28px;
    font-weight: 300;
`;

const SogouBadge = styled.div`
    display: flex;
    align-items: center;
    justify-content: center;
    flex: none;
    width: 22px;
    height: 22px;
    margin-left: 24px;
    background: #ee5420;
    border-radius: 4px;
    transform: rotate(-12deg);
    font-size: 20px;
    font-weight: 700;
    line-height: 22px;
`;

const Clock = styled.div`
    flex: none;
    width: 110px;
    margin-left: 20px;
    font-size: 19px;
    line-height: 28px;
    text-align: center;
    white-space: nowrap;
`;

const PRISM_FACES = [
    { points: '987,278 1045,247 1175,275 1005,875 876,848 817,879', fill: '#4c4c4c' },
    { points: '1045,247 1175,275 1005,875 876,848', fill: '#c4c4c4' },
    { points: '1175,275 1247,336 1077,936 1005,875', fill: '#838383' },
    { points: '817,879 876,848 1005,875 1077,936 1020,968 891,941', fill: '#545454' }
];

const treeChildren = [
    { key: 'window', label: '主窗口', icon: <WindowNodeIcon />, branch: 'mid' },
    { key: 'form', label: '表单', icon: <FormNodeIcon />, toggle: true },
    { key: 'event', label: '事件', icon: <EventNodeIcon />, branch: 'mid' },
    { key: 'library', label: '库', icon: <LibraryNodeIcon />, branch: 'last' }
];

const properties = [
    { group: '按钮' },
    { name: '文本', value: '生成网格' },
    { name: '图片', value: '', shade: true },
    { name: '源', value: '生成网格' },
    { name: '弹出表单', value: '', shade: true },
    { group: '基本信息' },
    { name: '标签', value: '按钮2', shade: true },
    { group: '位置' },
    { name: '宽', value: '65', shade: true },
    { name: '高', value: '20' },
    { name: 'X', value: '30', shade: true },
    { name: 'Y', value: '269' }
];

const taskApps = [
    { key: 'edge', icon: <EdgeIcon />, open: true },
    { key: 'explorer', icon: <ExplorerIcon /> },
    { key: 'mail', icon: <MailIcon /> },
    { key: 'phone', icon: <PhoneIcon />, open: true },
    { key: 'feishu', icon: <FeishuIcon />, open: true },
    { key: 'notes', icon: <NotesIcon />, open: true },
    { key: 'simdroid', icon: <AppLogo s={36} />, open: true, current: true },
    { key: 'swirl', icon: <SwirlIcon />, open: true },
    { key: 'wechat', icon: <WeChatIcon />, open: true }
];

const App = () => (
    <Screen>
        <GlobalStyle />
        <TitleBar>
            <QuickTools>
                <AppLogo />
                <QuickNew ml={7} />
                <QuickOpen ml={8} />
                <QuickSave ml={10} />
                <ArrowBack ml={9} fill="#b9bec6" stroke="#6c7480" />
                <Caret ml={10} />
                <ArrowBack ml={11} flip fill="#eceef0" stroke="#b5b8bc" />
                <Caret ml={10} color="#b5b8bc" />
                <QuickSep />
                <Refresh ml={7} />
                <QuickMore ml={10} />
            </QuickTools>
            <ContextTab>开发工具</ContextTab>
            <AppTitle>Simdroid</AppTitle>
            <WindowControls>
                <ControlSlot $w={71}>
                    <svg width="15" height="2" viewBox="0 0 15 2"><path d="M0 1 H15" stroke="#333" strokeWidth="1.2" /></svg>
                </ControlSlot>
                <ControlSlot $w={71}>
                    <svg width="15" height="15" viewBox="0 0 15 15">
                        <path d="M4 3 V1 H14 V11 H12" fill="none" stroke="#333" strokeWidth="1.2" />
                        <rect x="1" y="3" width="11" height="11" fill="none" stroke="#333" strokeWidth="1.4" />
                    </svg>
                </ControlSlot>
                <ControlSlot $w={71}>
                    <svg width="15" height="15" viewBox="0 0 15 15"><path d="M0 0 L15 15 M15 0 L0 15" stroke="#333" strokeWidth="1.2" /></svg>
                </ControlSlot>
            </WindowControls>
        </TitleBar>

        <MenuBar>
            <FileTab>文件</FileTab>
            <MenuItems>
                <span>主屏幕</span>
                <span>参数定义</span>
                <span>三维建模</span>
                <span>校核</span>
            </MenuItems>
            <ContextOutline />
            <CollapseMark width="14" height="13" viewBox="0 0 14 13">
                <path d="M1 8 L7 1 L13 8 L11 11 L7 7 L3 11 Z" fill="none" stroke="#6f7b87" strokeWidth="1.6" />
            </CollapseMark>
        </MenuBar>

        <Ribbon>
            <RibbonGroup $w={67}>
                <LargeTool $shift={4}>
                    <LargeIcon><CloseFolder /></LargeIcon>
                    关闭
                </LargeTool>
            </RibbonGroup>
            <RibbonGroup $w={101}>
                <LargeTool $shift={2}>
                    <LargeIcon><NewForm /></LargeIcon>
                    新建表单
                </LargeTool>
            </RibbonGroup>
            <RibbonGroup $w={122}>
                <ToolRows $top={19} $left={9}>
                    <ToolRow><FileMenuIcon />文件菜单</ToolRow>
                    <ToolRow><PageMenuIcon />页面菜单</ToolRow>
                </ToolRows>
            </RibbonGroup>
            <RibbonGroup $w={84}>
                <ToolRows $top={19} $left={8}>
                    <ToolRow><GroupIcon />分组</ToolRow>
                    <ToolRow $gap={6}><CommandIcon />命令</ToolRow>
                </ToolRows>
            </RibbonGroup>
            <ToolRows $top={2} $left={11}>
                <ToolRow $gap={6}><TagIcon />标签</ToolRow>
                <ToolRow $gap={6}><EditIcon />输入</ToolRow>
                <ToolRow $gap={6}><ShapeIcon />人物</ToolRow>
            </ToolRows>
        </Ribbon>

        <Body>
            <LeftPanel>
                <PanelCaption>组合浏览器</PanelCaption>
                <ModelTabs>
                    <ModelTab $active>模型</ModelTab>
                    <ModelTab>任务</ModelTab>
                </ModelTabs>
                <Tree>
                    <TreeRow $pad={8}><Toggle /><ModelIcon /><TreeLabel>棱柱的分析模型</TreeLabel></TreeRow>
                    <TreeRow $pad={38}><Toggle /><AppNodeIcon /><TreeLabel>App开发器</TreeLabel></TreeRow>
                    {treeChildren.map((item) => (
                        <TreeRow key={item.key} $pad={68} $branch={item.branch}>
                            {item.toggle ? <Toggle $closed /> : <TreeSpacer />}
                            {item.icon}
                            <TreeLabel>{item.label}</TreeLabel>
                        </TreeRow>
                    ))}
                </Tree>
                <PropHeader>
                    <PropHeadCell $pad={11}>属性</PropHeadCell>
                    <PropHeadCell $pad={12} $w={269} $last>值</PropHeadCell>
                </PropHeader>
                <PropList>
                    {properties.map((row) => (
                        row.group ? <PropGroup key={row.group}>{row.group}</PropGroup> : (
                            <PropRow key={row.name} $shade={row.shade}>
                                <PropGuide />
                                <PropName>{row.name}</PropName>
                                <PropValue>{row.value}</PropValue>
                            </PropRow>
                        )
                    ))}
                </PropList>
                <BottomTabs>
                    <BottomTab $active>视图</BottomTab>
                    <BottomTab>数据</BottomTab>
                </BottomTabs>
            </LeftPanel>
            <Workspace>
                <DesignFrame>
                    <DesignRow>
                        <DashedSheet>
                            <FormOutline>
                                <FormFill />
                            </FormOutline>
                        </DashedSheet>
                        <ScrollColumn>
                            <ScrollArrow />
                            <ScrollThumb />
                            <ScrollArrow $down $mt={622} />
                        </ScrollColumn>
                    </DesignRow>
                    <HorizontalEnd><ScrollArrowRight /></HorizontalEnd>
                </DesignFrame>
            </Workspace>
        </Body>

        <StatusBar />

        <Taskbar>
            <StartButton><WinLogo /></StartButton>
            <SearchBox>
                <SearchGlass />
                <SearchText>在此键入进行搜索</SearchText>
                <Gear size={24} color="#c5c6d4" hub="#f0f0f0" inner="#c5c6d4" />
                <Dial ml={3} />
                <Gear size={26} ml={3} color="#a8692a" hub="#f0f0f0" inner="#a8692a" />
            </SearchBox>
            <TaskSlot $w={74}><CortanaRing /></TaskSlot>
            <TaskSlot $w={68}>
                <TaskView width="24" height="22" viewBox="0 0 24 22">
                    <path d="M1 1 H20 V2 H1 Z M1 20 H20 V21 H1 Z M1 6 H20 V16 H1 Z M23 1 V21" fill="none" stroke="#fff" strokeWidth="1.2" />
                </TaskView>
            </TaskSlot>
            {taskApps.map((app, i) => (
                <TaskSlot key={app.key} $open={app.open} $current={app.current} $ml={i === 0 ? 7 : 0}>
                    {app.icon}
                </TaskSlot>
            ))}
            <NewsIcon ml={20} />
            <Chevron ml={39} />
            <Penguin ml={17} />
            <WifiIcon ml={17} />
            <BatteryIcon ml={13} />
            <VolumeIcon ml={13} />
            <InputMark>A</InputMark>
            <SogouBadge>S</SogouBadge>
            <Clock>
                <div>21:55</div>
                <div>2022/11/25</div>
            </Clock>
            <NoticeIcon ml={20} />
        </Taskbar>

        <Dialog>
            <DialogTitle>
                <AppLogo />
                Test
                <DialogControls>
                    <svg width="15" height="2" viewBox="0 0 15 2"><path d="M0 1 H15" stroke="#111" /></svg>
                    <svg width="15" height="15" viewBox="0 0 15 15"><rect x=".5" y=".5" width="14" height="14" fill="none" stroke="#111" /></svg>
                    <DialogClose width="15" height="15" viewBox="0 0 15 15"><path d="M0 0 L15 15 M15 0 L0 15" stroke="#111" /></DialogClose>
                </DialogControls>
            </DialogTitle>
            <DialogBody>
                <NameField />
                <SliderTrack><SliderKnob /></SliderTrack>
                <FormTabs>
                    <FormTab $active>表单2</FormTab>
                    <FormTab>表单3</FormTab>
                </FormTabs>
                <FormPanel>
                    <ActionColumn>
                        <ActionButton $top={0} $spread={4}>退出</ActionButton>
                        <ActionButton $top={8}>生成几何</ActionButton>
                        <ActionButton $top={6}>生成网格</ActionButton>
                    </ActionColumn>
                    <ViewerColumn>
                        <ViewToolbar>
                            <Camera ml={5} />
                            <Printer ml={15} />
                            <ToolSep $ml={14} />
                            <HexNone ml={17} />
                            <Caret ml={13} />
                            <ToolSep $ml={15} />
                            <ZoomBox ml={14} />
                            <MoveView ml={15} />
                            <FitDiamond ml={15} />
                            <AxisView ml={19} />
                            <Caret ml={12} />
                        </ViewToolbar>
                        <ViewCanvas viewBox="534 248 968 762" preserveAspectRatio="xMinYMin slice">
                            {PRISM_FACES.map((face) => (
                                <polygon key={face.fill} points={face.points} fill={face.fill} stroke="#1c1c1c" strokeWidth="1" strokeLinejoin="round" />
                            ))}
                            <path d="M592 951 L574 951" stroke="#10d010" strokeWidth="2" />
                            <path d="M574 951 L580 948.5 V953.5 Z" fill="#10d010" />
                            <path d="M592 951 L598 930" stroke="#1010f0" strokeWidth="2" />
                            <path d="M598 929 L600 937 L594.5 935.5 Z" fill="#1010f0" />
                            <path d="M592 951 L603 961" stroke="#f01010" strokeWidth="2" />
                            <path d="M604 961 L597 959 L601 954.5 Z" fill="#f01010" />
                            <text x="600" y="931" fontSize="10" fill="#1010f0" fontFamily={SANS}>z</text>
                            <text x="575" y="949" fontSize="10" fill="#10d010" fontFamily={SANS}>y</text>
                            <text x="606" y="961" fontSize="10" fill="#f01010" fontFamily={SANS}>x</text>
                        </ViewCanvas>
                    </ViewerColumn>
                </FormPanel>
            </DialogBody>
        </Dialog>
    </Screen>
);

export default App;
